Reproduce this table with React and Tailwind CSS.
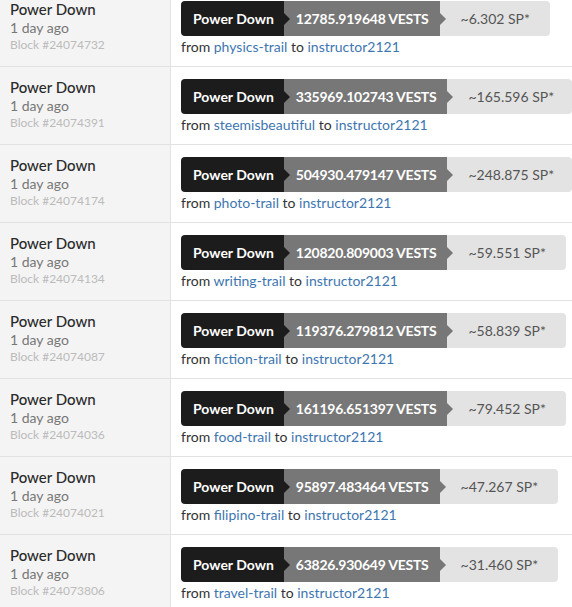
import React from "react";

const rows = [
  { block: "24074732", vests: "12785.919648", sp: "6.302", from: "physics-trail" },
  { block: "24074391", vests: "335969.102743", sp: "165.596", from: "steemisbeautiful" },
  { block: "24074174", vests: "504930.479147", sp: "248.875", from: "photo-trail" },
  { block: "24074134", vests: "120820.809003", sp: "59.551", from: "writing-trail" },
  { block: "24074087", vests: "119376.279812", sp: "58.839", from: "fiction-trail" },
  { block: "24074036", vests: "161196.651397", sp: "79.452", from: "food-trail" },
  { block: "24074021", vests: "95897.483464", sp: "47.267", from: "filipino-trail" },
  { block: "24073806", vests: "63826.930649", sp: "31.460", from: "travel-trail" },
];

function Arrow({ color }) {
  // little notch that pokes from one segment into the next
  return (
    <span
      className={`absolute left-0 top-1/2 -translate-y-1/2 w-0 h-0 border-y-[6px] border-y-transparent border-l-[6px] ${color}`}
    />
  );
}

function Row({ r }) {
  return (
    <div className="flex border-b border-[#e2e2e2] h-[78px]">
      <div className="w-[171px] shrink-0 bg-[#f4f4f4] border-r border-[#e2e2e2] pl-[10px] pt-[11px]">
        <div className="text-[15px] leading-[19px] text-[#2b2b2b] font-medium">Power Down</div>
        <div className="text-[14px] leading-[17px] text-[#777]">1 day ago</div>
        <div className="text-[12px] leading-[18px] text-[#bbb]">Block #{r.block}</div>
      </div>
      <div className="pl-[10px] pt-[12px] min-w-0">
        <div className="flex h-[35px] text-[14px] rounded-[4px] overflow-hidden whitespace-nowrap">
          <div className="bg-[#1c1c1c] text-white font-bold pl-[12px] pr-[10px] flex items-center">Power Down</div>
          <div className="relative bg-[#777777] text-white font-bold tracking-[-0.24px] pl-[12px] pr-[11px] flex items-center">
            <Arrow color="border-l-[#1c1c1c]" />
            {r.vests} VESTS
          </div>
          <div className="relative bg-[#e3e3e3] text-[#555] pl-[21px] pr-[20px] flex items-center">
            <Arrow color="border-l-[#777777]" />
            ~{r.sp} SP*
          </div>
        </div>
        <div className="text-[14px] leading-[20px] text-[#333] pt-[1px]">
          from <a className="text-[#3e76b0]">{r.from}</a> to{" "}
          <a className="text-[#3e76b0]">instructor2121</a>
        </div>
      </div>
    </div>
  );
}

export default function App() {
  return (
    <div
      className="w-[572px] h-[607px] overflow-hidden bg-white"
      style={{ fontFamily: "Lato, 'Liberation Sans', sans-serif" }}
    >
      <div className="-mt-[11px]">
        {rows.map((r) => (
          <Row key={r.block} r={r} />
        ))}
      </div>
    </div>
  );
}
